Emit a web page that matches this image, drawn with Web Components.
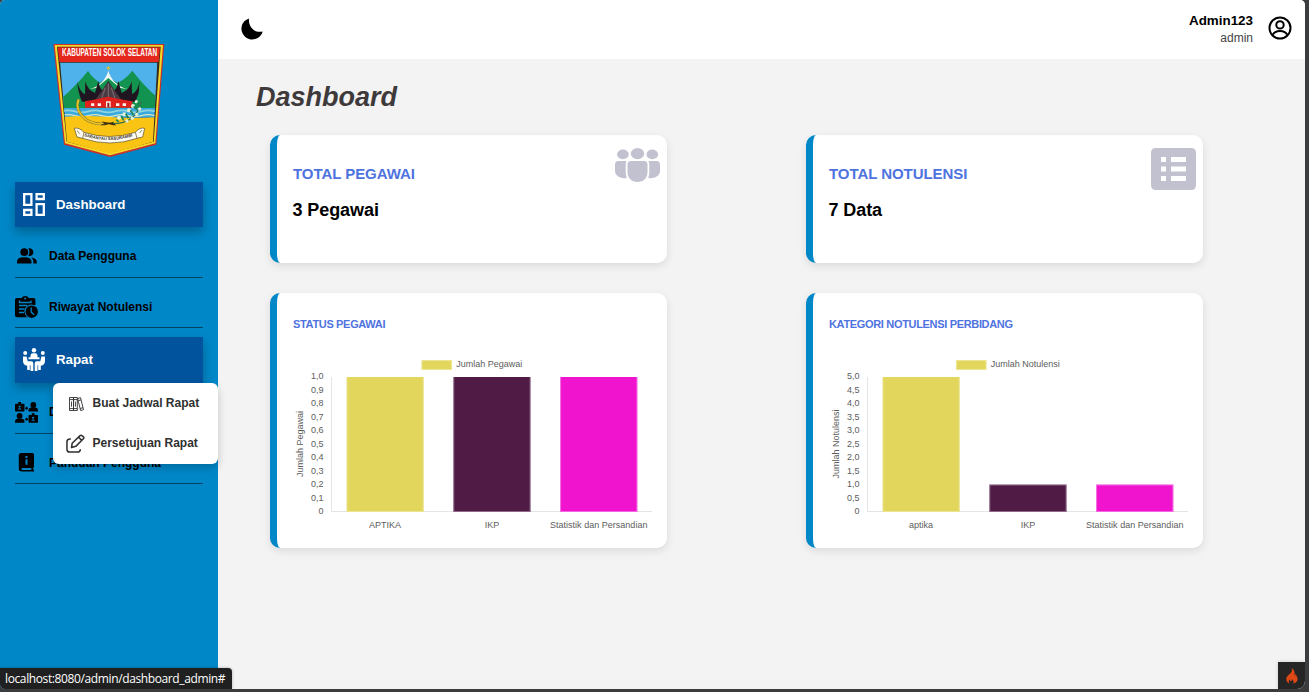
<!DOCTYPE html>
<html lang="id">
<head>
<meta charset="utf-8">
<title>Dashboard</title>
<style>
html,body{margin:0;height:100%;overflow:hidden;background:#3b3c3d;font-family:"Liberation Sans",Arial,sans-serif}
</style>
</head>
<body>
<app-shell></app-shell>
<script>
const define = (name, html) => customElements.define(name, class extends HTMLElement {
  connectedCallback() {
    if (this.shadowRoot) return;
    const root = this.attachShadow({mode: 'open'});
    const t = document.createElement('template');
    t.innerHTML = typeof html === 'function' ? html(this) : html;
    root.append(t.content.cloneNode(true));
  }
});

/* ---------- icons ---------- */
const icons = {
  dashboard: ['0 0 22 23', '<g fill="none" stroke="currentColor" stroke-width="2.300"><path d="M1.200 1.200h7.200v10.600H1.200zM13.600 1.200h7.200v4.800h-7.200zM1.200 17h7.200v4.800H1.200zM13.600 11.200h7.200v10.600h-7.200z"/></g>'],
  people: ['0 0 20 16', '<g fill="currentColor"><circle cx="7.300" cy="4.200" r="3.900"/><path d="M0 15.500v-1.800Q0 9.300 7.200 9.300t7.300 4.400v1.800zM11.300.5a3.900 3.900 0 1 1 0 7.400c1.500-2 1.500-5.400 0-7.400zM14 9.600c3.700.5 5.800 1.800 5.800 4.100v1.800h-3.500v-1.800c0-1.700-.8-3-2.300-4.100z"/></g>'],
  history: ['0 0 23 22', '<path fill="currentColor" d="M2 2.200h4.700Q7.500 0 10.200 0t3.500 2.200h4.700q2 0 2 2v5.600a7 7 0 0 0-4.900 13H2q-2 0-2-2V4.200q0-2 2-2z" transform="scale(1 .93)"/><circle cx="10.200" cy="2.600" r="1" fill="#0087c8"/><path d="M4.500 4.500v2H16v-2M4 9.500h8M4 13h5.500M4 16.500h5" fill="none" stroke="#0087c8" stroke-width="1.300"/><circle cx="16.300" cy="15.300" r="6.900" fill="#0087c8"/><circle cx="16.700" cy="15.700" r="6.200" fill="currentColor"/><path d="M16.200 11.500v4.600l3 2.700" fill="none" stroke="#0087c8" stroke-width="1.300"/>'],
  meeting: ['0 0 22 23', '<g fill="currentColor"><circle cx="11" cy="2.200" r="2.200"/><circle cx="2.200" cy="4.900" r="2"/><circle cx="19.800" cy="4.900" r="2"/><path d="M7.500 9.200V7.600Q7.500 5.300 9.700 5.300h2.600q2.200 0 2.200 2.300v1.600h2v2H5.500v-2zM0 8.500h3.600l1.100 4.700h3.600q2 0 2 2V23H7.500v-5.700h-.7V22H4.200v-4.300Q0 17 0 13zM22 8.500h-3.600l-1.100 4.700h-3.600q-2 0-2 2V23h2.800v-5.700h.7V22h2.600v-4.300Q22 17 22 13z"/></g>'],
  delegate: ['0 0 23 21', '<g fill="currentColor" fill-rule="evenodd"><path d="M.8 1.800h2.400V0h2.800v1.800h2.700q.8 0 .8.800v6.200q0 .8-.8.800H.8Q0 9.600 0 8.800V2.600q0-.8.800-.8zM2.900 7.500h3.500Q6.400 6.200 4.600 6.200T2.900 7.500zM4.600 3.400a1 1 0 1 0 .01 0zM14.300 13h2.500v-1.800h2.800V13h2.600q.8 0 .8.800v6.100q0 .8-.8.800h-7.900q-.8 0-.8-.8v-6.100q0-.8.800-.8zm2.100 5.800h3.500q0-1.300-1.800-1.300t-1.700 1.300zm1.700-4.100a1 1 0 1 0 .01 0z"/><circle cx="18.300" cy="3" r="2.900"/><path d="M13.500 9.600V8.500q0-3 3-3h3.500q3 0 3 3v1.100z"/><circle cx="4.600" cy="14" r="2.900"/><path d="M0 20.700v-1q0-3 3-3h3.500q3 0 3 3v1zM9.900 6.300l1.700-1.800 1.700 1.800-1.700 1.800zM9.900 17.300l1.700-1.800 1.700 1.800-1.700 1.800z"/></g>'],
  guide: ['0 0 17 20', '<path fill="currentColor" fill-rule="evenodd" d="M3.300 0H14.500Q16 0 16 1.500v12q0 .8-.8 1.300v2h.8v1.700H4Q.8 18.500.8 15.800V2.700Q.8 0 3.300 0zm4.200 3v2h2V3zM7.500 6.200v5.600h2V6.200zM4 15q-1.200 1 0 1.900h9.300V15z"/>'],
  books: ['0 0 16 16', '<g fill="none" stroke="currentColor" stroke-width=".9"><path d="M1.500 1.500h4v13h-4zM5.500 1.500h3.800v13H5.500zM1.500 3.600h7.800M1.500 12.600h7.800M3.500 5.500v5.200M7.400 5.500v5.200M9.600 2.500l2.900-.8 3 12-2.900.8zM10.200 4.700l2.900-.8M12.100 12.500l2.900-.8"/></g>'],
  edit: ['0 0 20 20', '<path fill="none" stroke="currentColor" stroke-width="1.600" stroke-linecap="round" stroke-linejoin="round" d="M4.500 5.200Q1 5.200 1 8.200V16q0 3 3 3h8q3 0 3-2.500M6.500 9.800 14.800 1.700q1-1 2 0l1.500 1.300q1 1 0 2L10.300 13l-4.500 1.200zM13.300 3.500l3.300 3.200"/>'],
  moon: ['0 0 22 22', '<path fill="currentColor" d="M8 .4A10.800 10.800 0 1 0 21.700 13.400C14.500 15.500 7 9.800 8 .4z"/>'],
  user: ['0 0 24 24', '<g fill="none" stroke="currentColor" stroke-width="2"><circle cx="12" cy="12" r="10.500"/><circle cx="12" cy="8.900" r="3.700"/><path d="M4.500 19.200c1.400-3.100 4-4.300 7.500-4.300s6.100 1.200 7.500 4.300"/></g>'],
  group: ['0 0 45 34', '<g fill="currentColor"><ellipse cx="22.500" cy="5.600" rx="6.700" ry="5.600"/><ellipse cx="7.900" cy="6.400" rx="5.800" ry="4.900"/><ellipse cx="37.300" cy="6.400" rx="5.800" ry="4.900"/><path d="M16 13h13q3.500 0 3.500 3.500V24c0 6-4 10-10 10s-10-4-10-10v-7.500Q12.500 13 16 13zM3.500 13h8q-.8 1.600-.8 4v7q0 3 1 6C5 31 0 27.500 0 23v-6.500Q0 13 3.500 13zM41.500 13h-8q.8 1.600.8 4v7q0 3-1 6C40 31 45 27.500 45 23v-6.500Q45 13 41.500 13z"/></g>'],
  list: ['0 0 45 42', '<path fill="currentColor" fill-rule="evenodd" d="M5 0h35q5 0 5 5v32q0 5-5 5H5q-5 0-5-5V5q0-5 5-5zm5 9v5h5V9zm10 0v5h15V9zM10 18.500v5h5v-5zm10 0v5h15v-5zM10 28v5h5v-5zm10 0v5h15v-5z"/>'],
  flame: ['0 0 12 16', '<path fill="currentColor" d="M5.500 0c1 2.300.5 3.500-.9 5.100C3 7 .3 8.200.3 11.200c0 2.100 1.300 3.900 3.500 4.500-1.500-1.400-1.300-3 .1-4.500-.1 1.300.4 2 1.100 2 .9-.1.900-1 .5-2.200 1.500.9 3.200 3.100 1.400 4.700 2.500-.3 4.700-2 4.700-4.600 0-2-1.300-3.300-1.900-5 -.6.8-.6 1.400-.9 2.200C8.700 4.700 8.800 1.800 5.500 0z"/>']
};
define('ui-icon', el => {
  const [box, body] = icons[el.getAttribute('name')];
  const w = el.getAttribute('w'), h = el.getAttribute('h');
  return `<style>:host{display:block;flex:none;width:${w}px;height:${h}px}svg{display:block}</style>
  <svg width="${w}" height="${h}" viewBox="${box}" preserveAspectRatio="none">${body}</svg>`;
});

/* ---------- regional emblem ---------- */
define('region-emblem', `
<style>
:host{display:block;position:relative;width:130px;height:130px}svg{display:block}
span{position:absolute;left:17px;top:15.300px;font:700 5.900px/7px "Liberation Sans",Arial,sans-serif;color:#fff;white-space:nowrap;transform:scale(1.090,1.850);transform-origin:0 50%}
</style>
<svg width="130" height="130" viewBox="0 0 390 390">
  <defs><clipPath id="c"><path d="M45 80H337L324 320 195 356 66 320z"/></clipPath><path id="r" d="M117 303Q195 329 274 300"/></defs>
  <path d="M25 27H358L334 329 195 366 57 329z" fill="#c9302c"/>
  <path d="M29 30H354L331 325 195 361 60 325z" fill="#f5d928"/>
  <path d="M36 35H347L326 320 195 354 65 320z" fill="#3a2a1c"/>
  <path d="M38 37H345L341 81H43z" fill="#e5261c"/>
  <g clip-path="url(#c)">
    <path d="M40 83H345V230H40z" fill="#4fb2ea"/>
    <path d="M50 190Q95 150 129 108 145 132 165 143L190 128 218 143Q242 133 262 107 296 152 340 190V222H50z" fill="#12934f"/>
    <path d="M50 219H340V248H50z" fill="#39a9df"/>
    <path d="M50 229q20-6 40 0t40 0 40 0 40 0 40 0 40 0 40 0" fill="none" stroke="#8fd4dd" stroke-width="5"/>
    <path d="M50 242q20-6 40 0t40 0 40 0 40 0 40 0 40 0 40 0" fill="none" stroke="#d5e8c8" stroke-width="4"/>
    <path d="M50 246q70-6 145 0t145 0V360H50z" fill="#f9c414"/>
  </g>
  <path d="M190 92l2 5 5 0-4 3 2 5-5-3-5 3 2-5-4-3 5 0z" fill="#e2c02a"/>
  <path d="M133 163Q179 148 190 107 201 148 248 163L224 158 190 129 155 158z" fill="#f4f8f4"/>
  <path d="M97 140Q104 170 120 178L121 139Q128 166 150 174L160 138Q163 158 172 166L190 138 208 166Q217 158 220 138L230 174Q253 166 260 139L261 178Q278 170 284 139L281 174 271 200H111Q99 174 97 140z" fill="#201621"/>
  <path d="M190 140 230 196H150z" fill="#4a3a42"/>
  <path d="M190 146v48M181 158l-12 36M199 158l12 36" stroke="#9d8a90" stroke-width="2"/>
  <path d="M120 199l34-6 36-8 36 8 36 6v19H120z" fill="#e0201c"/>
  <path d="M138 205h10v8h-10zM158 205h10v8h-10zM183 199h14v18h-14zM213 205h10v8h-10zM233 205h10v8h-10z" fill="#f7f3ec"/>
  <path d="M187 203h6v14h-6z" fill="#8a1a18"/>
  <path d="M101 193Q88 225 122 253 149 270 182 266" fill="none" stroke="#8b7a25" stroke-width="8"/>
  <path d="M101 193Q88 225 122 253 149 270 182 266" fill="none" stroke="#e8c22c" stroke-width="5"/>
  <path d="M198 266Q273 268 289 199" fill="none" stroke="#39754b" stroke-width="4"/>
  <g fill="#e4f2dc"><circle cx="222" cy="248" r="6"/><circle cx="238" cy="238" r="6"/><circle cx="252" cy="226" r="6"/><circle cx="264" cy="213" r="6"/><circle cx="274" cy="200" r="5"/><circle cx="246" cy="258" r="5"/><circle cx="262" cy="250" r="5"/><circle cx="275" cy="238" r="5"/><circle cx="284" cy="222" r="5"/></g>
  <path d="M214 254l7 7M229 244l7 12M242 236l8 13M256 226l9 13M266 214l10 10M277 203l8 8" stroke="#1f8050" stroke-width="5"/>
  <path d="M169 270q21-12 43 0M173 261l35 9M176 270l30-8" stroke="#33290f" stroke-width="3" fill="none"/>
  <path d="M88 280q14-4 29 12 76 25 154 0 14-16 28-12l-6 26-17 4q-81 28-163 0l-17-4z" fill="#fffdf4" stroke="#544821" stroke-width="2"/>
  <path d="M117 292l-4 18M271 292l5 18M96 286l8 10M291 285l-7 9" stroke="#544821" stroke-width="2"/>
  <text font-family="Liberation Sans,sans-serif" font-weight="700" font-size="12.500" fill="#382f2a"><textPath href="#r">SARANTAU SASURAMBI</textPath></text>
</svg><span>KABUPATEN SOLOK SELATAN</span>`);

/* ---------- sidebar ---------- */
define('nav-item', `
<style>
:host{display:flex;align-items:center;box-sizing:border-box;height:41px;border-bottom:1px solid #044463;color:#000;font-weight:700;font-size:12px}
.i{width:34px;display:flex;flex:none}
:host([active]){height:45px;border:0;background:#00539c;color:#fff;font-size:13.300px;box-shadow:0 5px 10px rgba(0,0,0,.28);padding-left:8px}
:host([active]) .i{width:33px}
:host([tall]){height:46px;padding-bottom:1px}
:host([raised]){padding-bottom:2px}
span{white-space:nowrap}
</style><div class="i"><slot name="icon"></slot></div><span><slot></slot></span>`);
define('side-bar', `
<style>
:host{display:flex;flex-direction:column;width:218px;background:#0087c8;box-sizing:border-box;padding:35px 15px 0}
region-emblem{margin:0 0 17px 30px}
nav{display:flex;flex-direction:column}
nav-item{margin-bottom:9px}
.g{margin-bottom:10px}
.n{margin-left:2px}.m{margin-left:3px}
</style>
<region-emblem></region-emblem>
<nav>
<nav-item active class="g"><ui-icon slot="icon" name="dashboard" w="22" h="23"></ui-icon>Dashboard</nav-item>
<nav-item raised><ui-icon class="n" slot="icon" name="people" w="20" h="16"></ui-icon>Data Pengguna</nav-item>
<nav-item><ui-icon slot="icon" name="history" w="23" h="22"></ui-icon>Riwayat Notulensi</nav-item>
<nav-item active tall class="g"><ui-icon slot="icon" name="meeting" w="22" h="23"></ui-icon>Rapat</nav-item>
<nav-item raised><ui-icon slot="icon" name="delegate" w="23" h="21"></ui-icon>D</nav-item>
<nav-item><ui-icon class="m" slot="icon" name="guide" w="17" h="20"></ui-icon>Panduan Pengguna</nav-item>
</nav>`);
define('sub-menu', `
<style>
:host{display:flex;flex-direction:column;box-sizing:border-box;width:165px;height:81px;background:#fff;border-radius:6px;box-shadow:0 4px 8px rgba(0,0,0,.2);color:#303030;font:700 12px "Liberation Sans",Arial,sans-serif}
div{height:40px;display:flex;align-items:center;white-space:nowrap}
.b{margin:1px 8.500px 0 15px}.e{margin:0 7.500px 0 13px}
</style>
<div><ui-icon class="b" name="books" w="16" h="16"></ui-icon>Buat Jadwal Rapat</div>
<div><ui-icon class="e" name="edit" w="19" h="19"></ui-icon>Persetujuan Rapat</div>`);

/* ---------- header ---------- */
define('top-bar', `
<style>
:host{display:flex;align-items:center;justify-content:space-between;height:59px;background:#fff;box-sizing:border-box;padding:0 13px 3px 23px;color:#000}
.u{display:flex;align-items:center;gap:15px}
.t{text-align:right;font-size:12px;line-height:18px;color:#444;padding-top:2px}
b{display:block;font-size:13.400px;line-height:17px;color:#000}
.m{margin:1px 0 0 -.5px}
</style>
<ui-icon class="m" name="moon" w="22" h="22"></ui-icon>
<div class="u"><div class="t"><b>Admin123</b>admin</div><ui-icon name="user" w="24" h="24"></ui-icon></div>`);

/* ---------- cards ---------- */
const cardBox = 'box-sizing:border-box;background:#fff;border-left:7px solid #0087c8;border-radius:10px;box-shadow:0 3px 8px rgba(0,0,0,.1)';
define('stat-card', `
<style>
:host{display:flex;justify-content:space-between;height:128px;padding:0 7px 0 16px;${cardBox}}
.t{padding-top:30px;color:#4e73df;font-weight:700;font-size:15px;line-height:18px;letter-spacing:-.05px}
.v{color:#000;font-size:18px;line-height:22px;margin:16px 0 0 -.5px;letter-spacing:-.08px}
slot[name=icon]{display:block;color:#c2c1cf;padding-top:13px}
</style>
<div class="t"><slot name="title"></slot><div class="v"><slot></slot></div></div><slot name="icon"></slot>`);

define('bar-chart', el => {
  const d = JSON.parse(el.getAttribute('data'));
  const colors = ['#e2d75c', '#501c46', '#f014cf'];
  let s = '';
  for (let i = 0; i <= 10; i++) {
    const v = d.max * i / 10;
    s += `<text x="30.500" y="${161.300 - i * 13.500}" text-anchor="end">${i ? v.toFixed(1).replace('.', ',') : '0'}</text>`;
  }
  d.bars.forEach(([name, val], i) => {
    const full = val === d.max;
    const x = 53.500 + i * 106.800, top = full ? 24 : 131.500, h = 159 - top;
    s += `<rect x="${x}" y="${top}" width="77.300" height="${h}" fill="${colors[i]}"/>
    <path d="M${x + .5} ${top + (full ? 0 : .5)}V158.500H${x + 76.800}V${top + (full ? 0 : .5)}${full ? '' : 'z'}" fill="none" stroke="#fff" stroke-opacity=".35"/>
    <text x="${x + 38.600}" y="174.600" text-anchor="middle" ${name.length > 8 ? 'textLength="97.500"' : ''}>${name}</text>`;
  });
  return `<style>:host{display:block}svg{display:block;overflow:visible}text{font:9px "Liberation Sans",Arial,sans-serif;fill:#5c5c5c}</style>
  <svg width="360" height="182" viewBox="0 0 360 182">
    <path d="M38.500 24v135M38 158.500h321" stroke="#e5e5e5"/>
    <rect x="${d.lx}" y="7" width="30.500" height="10" fill="#e2d75c"/><rect x="${d.lx + .5}" y="7.500" width="29.500" height="9" fill="none" stroke="#fff" stroke-opacity=".35"/>
    <text x="${d.lx + 34.700}" y="14.200" textLength="${d.lw}">${d.label}</text>
    <text transform="translate(10 91) rotate(-90)" text-anchor="middle" textLength="${d.lw}">${d.label}</text>${s}
  </svg>`;
});
define('chart-card', `
<style>
:host{display:block;height:255px;padding:23px 0 0 16px;${cardBox}}
h6{margin:0 0 21px;font-size:11px;line-height:16px;color:#4e73df;font-weight:700;letter-spacing:-.33px}
</style><h6><slot name="title"></slot></h6><slot></slot>`);

/* ---------- page ---------- */
define('dashboard-page', `
<style>
:host{display:block;padding:21px 102px 0 52px}
h1{margin:0 0 20px -14px;font:italic 700 27px/35px "Liberation Sans",Arial,sans-serif;color:#3e3a3b}
.g{display:grid;grid-template-columns:397px 397px;column-gap:139px;row-gap:30px}
</style>
<h1>Dashboard</h1>
<div class="g">
<stat-card><span slot="title">TOTAL PEGAWAI</span>3 Pegawai<ui-icon slot="icon" name="group" w="45" h="34"></ui-icon></stat-card>
<stat-card><span slot="title">TOTAL NOTULENSI</span>7 Data<ui-icon slot="icon" name="list" w="45" h="42"></ui-icon></stat-card>
<chart-card><span slot="title">STATUS PEGAWAI</span><bar-chart data='{"label":"Jumlah Pegawai","lx":128.500,"lw":66,"max":1,"bars":[["APTIKA",1],["IKP",1],["Statistik dan Persandian",1]]}'></bar-chart></chart-card>
<chart-card><span slot="title">KATEGORI NOTULENSI PERBIDANG</span><bar-chart data='{"label":"Jumlah Notulensi","lx":127,"lw":69,"max":5,"bars":[["aptika",5],["IKP",1],["Statistik dan Persandian",1]]}'></bar-chart></chart-card>
</div>`);

define('status-tip', `
<style>:host{display:block;box-sizing:border-box;width:232px;height:21px;padding-left:5px;background:#202020;border-top-right-radius:4px;color:#fff;font:12px/21px "Open Sans","Noto Sans",sans-serif;letter-spacing:-.38px;white-space:nowrap;box-shadow:0 0 3px rgba(0,0,0,.3)}</style>
<span>localhost:8080/admin/dashboard_admin#</span>`);
define('debug-toggle', `
<style>:host{display:flex;align-items:center;justify-content:center;width:27px;height:27px;background:#252525;color:#dd4814;border-bottom-right-radius:7px;box-shadow:0 0 4px rgba(0,0,0,.15)}</style>
<ui-icon name="flame" w="12" h="16"></ui-icon>`);

define('app-shell', `
<style>
:host{display:flex;position:relative;width:1305px;height:689px;background:#f3f3f3;border-radius:5px 5px 8px 5px;overflow:hidden}
main{flex:1;min-width:0}
sub-menu{position:absolute;left:53px;top:383px}
status-tip{position:absolute;left:0;bottom:0}
debug-toggle{position:absolute;right:0;bottom:0}
</style>
<side-bar></side-bar>
<main><top-bar></top-bar><dashboard-page></dashboard-page></main>
<sub-menu></sub-menu><status-tip></status-tip><debug-toggle></debug-toggle>`);
</script>
</body>
</html>
